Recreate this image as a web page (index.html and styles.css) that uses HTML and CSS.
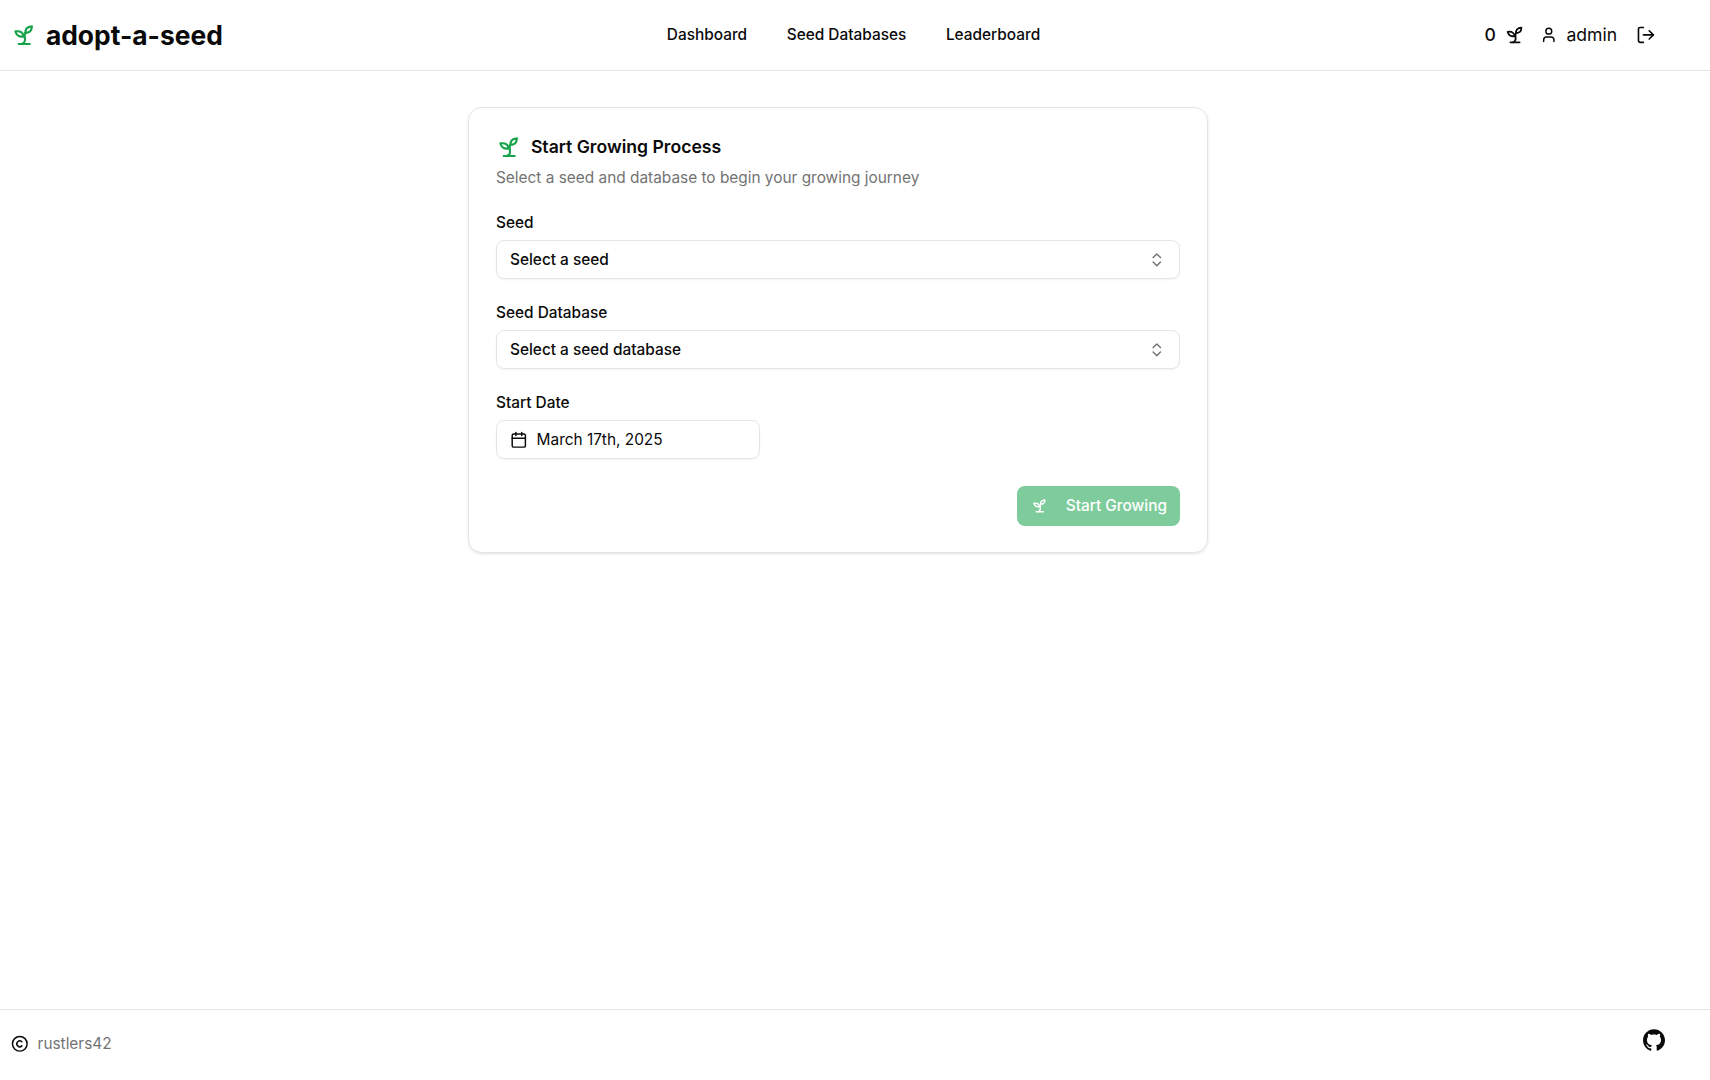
FILE: index.html
```html
<!DOCTYPE html>
<html lang="en">
<head>
<meta charset="utf-8">
<title>adopt-a-seed</title>
<link rel="stylesheet" href="styles.css">
</head>
<body>
<svg class="defs" aria-hidden="true">
  <symbol id="sprout" viewBox="0 0 24 24"><path d="M7 20h10"/><path d="M10 20c5.5-2.5.8-6.4 3-10"/><path d="M9.5 9.4c1.1.8 1.8 2.2 2.3 3.7-2 .4-3.5.4-4.8-.3-1.2-.6-2.3-1.9-3-4.2 2.8-.5 4.4 0 5.5.8z"/><path d="M14.1 6a7 7 0 0 0-1.1 4c1.9-.1 3.3-.6 4.3-1.4 1-1 1.6-2.3 1.7-4.6-2.7.1-4 1-4.9 2z"/></symbol>
  <symbol id="updown" viewBox="0 0 24 24"><path d="m7 15 5 5 5-5"/><path d="m7 9 5-5 5 5"/></symbol>
</svg>
<div class="app">
  <header class="topbar">
    <div class="brand">
      <svg class="icon icon-green brand-icon"><use href="#sprout"/></svg>
      <span class="brand-name">adopt-a-seed</span>
    </div>
    <nav class="nav">
      <a class="nav-link">Dashboard</a>
      <a class="nav-link">Seed Databases</a>
      <a class="nav-link">Leaderboard</a>
    </nav>
    <div class="account">
      <span class="count">0</span>
      <svg class="icon count-icon"><use href="#sprout"/></svg>
      <svg class="icon user-icon" viewBox="0 0 24 24"><path d="M19 21v-2a4 4 0 0 0-4-4H9a4 4 0 0 0-4 4v2"/><circle cx="12" cy="7" r="4"/></svg>
      <span class="username">admin</span>
      <svg class="icon logout-icon" viewBox="0 0 24 24"><path d="M9 21H5a2 2 0 0 1-2-2V5a2 2 0 0 1 2-2h4"/><path d="m16 17 5-5-5-5"/><path d="M21 12H9"/></svg>
    </div>
  </header>
  <main class="main">
    <section class="card">
      <h1 class="card-title">
        <svg class="icon icon-green title-icon"><use href="#sprout"/></svg>
        Start Growing Process
      </h1>
      <p class="card-sub">Select a seed and database to begin your growing journey</p>
      <div class="field">
        <label class="label">Seed</label>
        <div class="select"><span>Select a seed</span><svg class="icon chevrons"><use href="#updown"/></svg></div>
      </div>
      <div class="field">
        <label class="label">Seed Database</label>
        <div class="select"><span>Select a seed database</span><svg class="icon chevrons"><use href="#updown"/></svg></div>
      </div>
      <div class="field">
        <label class="label">Start Date</label>
        <div class="date">
          <svg class="icon cal-icon" viewBox="0 0 24 24"><path d="M8 2v4"/><path d="M16 2v4"/><rect x="3" y="4" width="18" height="18" rx="2"/><path d="M3 10h18"/></svg>
          <span>March 17th, 2025</span>
        </div>
      </div>
      <div class="actions">
        <button class="submit" disabled>
          <svg class="icon submit-icon"><use href="#sprout"/></svg>
          <span>Start Growing</span>
        </button>
      </div>
    </section>
  </main>
  <footer class="footer">
    <div class="credit">
      <svg class="icon copy-icon" viewBox="0 0 24 24"><circle cx="12" cy="12" r="10"/><path d="M14.83 14.83a4 4 0 1 1 0-5.66"/></svg>
      <span>rustlers42</span>
    </div>
    <svg class="github" viewBox="0 0 24 24"><path d="M12 .297c-6.63 0-12 5.373-12 12 0 5.303 3.438 9.8 8.205 11.385.6.113.82-.258.82-.577 0-.285-.01-1.04-.015-2.04-3.338.724-4.042-1.61-4.042-1.61C4.422 18.07 3.633 17.7 3.633 17.7c-1.087-.744.084-.729.084-.729 1.205.084 1.838 1.236 1.838 1.236 1.07 1.835 2.809 1.305 3.495.998.108-.776.417-1.305.76-1.605-2.665-.3-5.466-1.332-5.466-5.93 0-1.31.465-2.38 1.235-3.22-.135-.303-.54-1.523.105-3.176 0 0 1.005-.322 3.3 1.23.96-.267 1.98-.399 3-.405 1.02.006 2.04.138 3 .405 2.28-1.552 3.285-1.23 3.285-1.23.645 1.653.24 2.873.12 3.176.765.84 1.23 1.91 1.23 3.22 0 4.61-2.805 5.625-5.475 5.92.42.36.81 1.096.81 2.22 0 1.606-.015 2.896-.015 3.286 0 .315.21.69.825.57C20.565 22.092 24 17.592 24 12.297c0-6.627-5.373-12-12-12"/></svg>
  </footer>
</div>
</body>
</html>
```
FILE: styles.css
```css
* { box-sizing: border-box; }
html, body { margin: 0; padding: 0; }
body { font-family: Inter, "Liberation Sans", sans-serif; font-size: 15.4px; color: #0a0a0a; background: #fff; }
.defs { display: none; }
.app { min-height: 100vh; display: flex; flex-direction: column; }
.icon { fill: none; stroke: currentColor; stroke-width: 2; stroke-linecap: round; stroke-linejoin: round; flex: none; display: block; }
.icon-green { color: #16a34a; }

.topbar { height: 71px; flex: none; border-bottom: 1px solid #e5e5e5; display: grid; grid-template-columns: 1fr auto 1fr; align-items: center; }
.brand { display: flex; align-items: center; padding-left: 11px; }
.brand-icon { width: 26.4px; height: 26.4px; margin-right: 8.5px; }
.brand-name { font-size: 26.4px; font-weight: 700; line-height: 32px; }
.nav { display: flex; gap: 39.6px; padding-right: 3px; margin-top: -1px; }
.nav-link { font-size: 15.4px; font-weight: 500; line-height: 24px; }
.account { display: flex; align-items: center; justify-content: flex-end; padding-right: 54px; margin-top: -1px; }
.count { font-size: 17.6px; font-weight: 500; line-height: 24px; }
.count-icon { width: 22px; height: 22px; margin-left: 8px; }
.user-icon { width: 17.6px; height: 17.6px; margin-left: 14px; }
.username { font-size: 17.6px; line-height: 24px; margin-left: 9px; }
.logout-icon { width: 19.8px; height: 19.8px; margin-left: 19px; }

.main { flex: 1; padding: 36px 34px 0 0; display: flex; justify-content: center; align-items: flex-start; }
.card { width: 740px; height: 446px; border: 1px solid #e5e5e5; border-radius: 14px; padding: 26px 27px; box-shadow: 0 1px 3px rgba(0,0,0,.1), 0 1px 2px -1px rgba(0,0,0,.1); display: flex; flex-direction: column; }
.card-title { margin: 0; display: flex; align-items: center; gap: 8.5px; font-size: 17.6px; font-weight: 600; line-height: 24px; }
.title-icon { width: 26.4px; height: 26.4px; }
.card-sub { margin: 6.5px 0 0; font-size: 15.4px; line-height: 22px; color: #737373; }
.field { display: flex; flex-direction: column; margin-top: 24.5px; }
.label { font-size: 15.4px; font-weight: 500; line-height: 20px; margin-bottom: 7px; }
.select { height: 38.5px; border: 1px solid #e5e5e5; border-radius: 8px; padding: 0 13px; display: flex; align-items: center; justify-content: space-between; font-size: 15.4px; font-weight: 500; box-shadow: 0 1px 2px rgba(0,0,0,.05); }
.chevrons { width: 17.6px; height: 17.6px; color: #737373; }
.date { width: 264px; height: 38.5px; border: 1px solid #e5e5e5; border-radius: 8px; padding: 0 13px; display: flex; align-items: center; gap: 9px; font-size: 15.4px; box-shadow: 0 1px 2px rgba(0,0,0,.05); }
.cal-icon { width: 17.6px; height: 17.6px; }
.actions { display: flex; justify-content: flex-end; margin-top: 27px; }
.submit { width: 163px; height: 40px; border: 0; border-radius: 8px; background: #16a34a; opacity: .55; color: #fff; font: 500 15.4px Inter, "Liberation Sans", sans-serif; white-space: nowrap; display: flex; align-items: center; justify-content: flex-end; padding: 0 13px; }
.submit-icon { width: 17.6px; height: 17.6px; margin-right: 17px; }

.footer { height: 71px; flex: none; border-top: 1px solid #e5e5e5; display: flex; justify-content: space-between; align-items: flex-start; padding: 19px 45px 0 11px; }
.credit { display: flex; align-items: center; gap: 9px; font-size: 15.4px; line-height: 24px; color: #737373; margin-top: 3px; }
.copy-icon { width: 17.6px; height: 17.6px; color: #0a0a0a; }
.github { width: 22px; height: 22px; fill: #0a0a0a; display: block; }
```
